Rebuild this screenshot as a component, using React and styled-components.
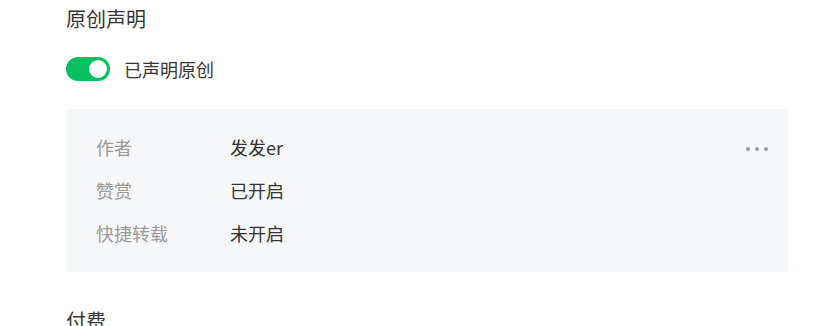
import React from 'react';
import styled, { createGlobalStyle } from 'styled-components'

const GlobalStyle = createGlobalStyle`
  body {
    margin: 0;
    background: #FFFFFF;
    font-family: "Noto Sans CJK SC", "Noto Sans", sans-serif;
    color: #333333;
  }
`

const Page = styled.div`
  padding: 5px 41px 0 66px;
`

const Section = styled.section`
  margin-bottom: ${props => props.gap || 0}px;
`

const Title = styled.h3`
  margin: 0;
  font-size: 20px;
  line-height: 28px;
  font-weight: 400;
  color: #353535;
`

const SwitchRow = styled.label`
  display: flex;
  align-items: center;
  gap: 14px;
  margin-top: 22px;
  height: 28px;
  font-size: 18px;
  color: #353535;
  cursor: pointer;
`

const Track = styled.span`
  position: relative;
  display: inline-block;
  width: 44px;
  height: 24px;
  border-radius: 12px;
  background: ${props => props.on ? '#07C160' : '#D9D9D9'};
`

const Knob = styled.span`
  position: absolute;
  top: 3px;
  left: ${props => props.on ? '23px' : '3px'};
  width: 18px;
  height: 18px;
  border-radius: 50%;
  background: #FFFFFF;
`

const Card = styled.div`
  position: relative;
  margin-top: 26px;
  padding: 24px 30px 25px 30px;
  background: #F6F7F9;
  border-radius: 4px;
  display: flex;
  flex-direction: column;
  gap: 15px;
`

const Row = styled.div`
  display: flex;
  font-size: 18px;
  line-height: 28px;
`

const Label = styled.span`
  width: 134px;
  color: #9A9A9A;
`

const Value = styled.span`
  color: #333333;
`

const More = styled.button`
  position: absolute;
  top: 34px;
  right: 18px;
  display: flex;
  gap: 5px;
  padding: 4px 2px;
  border: none;
  background: none;
  cursor: pointer;
`

const Dot = styled.i`
  width: 4px;
  height: 4px;
  border-radius: 50%;
  background: #9A9A9A;
`

const rows = [
  { label: '作者', value: '发发er' },
  { label: '赞赏', value: '已开启' },
  { label: '快捷转载', value: '未开启' },
]

export default function App(){
  return (
    <>
      <GlobalStyle />
      <Page>
        <Section gap={35}>
          <Title>原创声明</Title>
          <SwitchRow>
            <Track on={1}><Knob on={1} /></Track>
            已声明原创
          </SwitchRow>
          <Card>
            {rows.map(r => (
              <Row key={r.label}>
                <Label>{r.label}</Label>
                <Value>{r.value}</Value>
              </Row>
            ))}
            <More aria-label="更多">
              <Dot /><Dot /><Dot />
            </More>
          </Card>
        </Section>
        <Section>
          <Title>付费</Title>
        </Section>
      </Page>
    </>
  )
}
